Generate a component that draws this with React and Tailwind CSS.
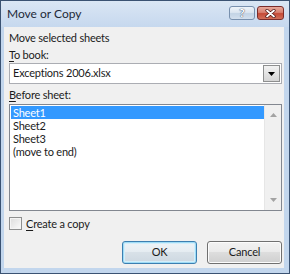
import React from 'react';

const sheets = ['Sheet1', 'Sheet2', 'Sheet3', '(move to end)'];

const WinButton = ({ children, primary }) => (
  <div
    className={
      'w-[75px] h-[23px] rounded-[3px] border flex items-center justify-center text-[#1b1b1b] ' +
      (primary
        ? 'border-[#3c7fb1] bg-[linear-gradient(#eef3f7_0%,#e6edf2_45%,#d8e1e8_50%,#cdd8e1_100%)] shadow-[inset_0_0_0_1px_#9fdcf6,inset_0_0_0_2px_#d4eefa]'
        : 'border-[#707070] bg-[linear-gradient(#f2f2f2_0%,#ebebeb_45%,#dddddd_50%,#cfcfcf_100%)] shadow-[inset_0_0_0_1px_#fcfcfc]')
    }
  >
    {children}
  </div>
);

export default function App() {
  return (
    <div className="w-[290px] h-[274px] border border-[#3a5272] bg-[#c2d6ed] flex flex-col font-['Lato','Liberation_Sans',sans-serif] text-[11px] tracking-[-0.2px] text-[#1b1b1b] select-none">
      {/* title bar */}
      <div className="h-[26px] flex items-start bg-[linear-gradient(#dae6f4,#c6d8ee)]">
        <div className="pl-[6px] pt-[5px] text-[12px] tracking-normal leading-[15px] text-[#1e2a38]">Move or Copy</div>
        <div className="ml-auto flex gap-[2px] pt-[5px] pr-[5px]">
          <div className="w-[26px] h-[14px] rounded-[3px] border border-[#7890ae] bg-[linear-gradient(#eef3f9_0%,#dce6f1_45%,#c3d3e5_55%,#d3e0ee_100%)] flex items-center justify-center">
            <span className="text-[12px] leading-none font-bold text-white [text-shadow:0_0_1px_#3a4c66,0_0_1px_#3a4c66]">?</span>
          </div>
          <div className="w-[27px] h-[14px] rounded-[3px] border border-[#7b2c2a] bg-[linear-gradient(#e9a99a_0%,#d88070_45%,#c54a36_55%,#d2705a_100%)] flex items-center justify-center">
            <svg width="11" height="9" viewBox="0 0 11 9">
              <path d="M2 1.5 L9 7.5 M9 1.5 L2 7.5" stroke="#4a1210" strokeWidth="3.2" strokeLinecap="round" />
              <path d="M2 1.5 L9 7.5 M9 1.5 L2 7.5" stroke="#ffffff" strokeWidth="1.8" strokeLinecap="round" />
            </svg>
          </div>
        </div>
      </div>

      {/* client area */}
      <div className="flex-1 ml-[3px] mr-[5px] mb-[5px] bg-[#f0f0f0] pl-[5px] pr-[2px] pt-[4px] flex flex-col">
        <div className="leading-[13px]">Move selected sheets</div>
        <div className="leading-[13px] mt-[4px]">
          <span className="underline underline-offset-2">T</span>o book:
        </div>
        <div className="mt-[2px] h-[21px] border border-[#abadb3] bg-white flex items-center">
          <span className="pl-[3px] flex-1">Exceptions 2006.xlsx</span>
          <div className="w-[17px] h-[17px] mr-[1px] border border-[#8e8f8f] bg-[linear-gradient(#f2f2f2,#d5d5d5)] flex items-center justify-center">
            <svg width="7" height="4" viewBox="0 0 7 4">
              <path d="M0 0 H7 L3.5 4 Z" fill="#000" />
            </svg>
          </div>
        </div>
        <div className="leading-[13px] mt-[4px]">
          <span className="underline underline-offset-2">B</span>efore sheet:
        </div>
        <div className="mt-[3px] h-[107px] border border-[#828790] bg-white flex">
          <div className="flex-1 pt-px pl-px">
            {sheets.map((s, i) => (
              <div
                key={s}
                className={'h-[13px] leading-[13px] pl-[2px] overflow-hidden ' + (i === 0 ? 'bg-[#3399ff] text-white' : '')}
              >
                {s}
              </div>
            ))}
          </div>
          <div className="w-[17px] bg-[#f0f0f0] border-l border-[#e6e6e6] flex flex-col items-center justify-between py-[8px]">
            <svg width="7" height="4" viewBox="0 0 7 4">
              <path d="M0 4 H7 L3.5 0 Z" fill="#a3a3a3" />
            </svg>
            <svg width="7" height="4" viewBox="0 0 7 4">
              <path d="M0 0 H7 L3.5 4 Z" fill="#a3a3a3" />
            </svg>
          </div>
        </div>
        <div className="mt-[6px] flex items-center h-[13px]">
          <div className="w-[13px] h-[13px] border border-[#8e8f8f] bg-[linear-gradient(135deg,#dcdcdc,#fbfbfb)] shadow-[inset_0_0_0_1px_#f4f4f4]" />
          <span className="ml-[4px] leading-[13px]">
            <span className="underline underline-offset-2">C</span>reate a copy
          </span>
        </div>
        <div className="mt-[11px] flex justify-end gap-[10px]">
          <WinButton primary>OK</WinButton>
          <WinButton>Cancel</WinButton>
        </div>
      </div>
    </div>
  );
}
